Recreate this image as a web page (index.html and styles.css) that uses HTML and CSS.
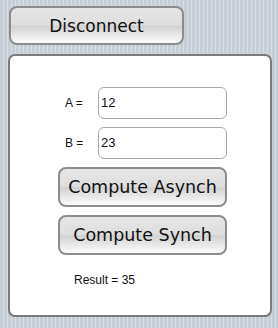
FILE: index.html
```html
<!DOCTYPE html>
<html>
<head>
<meta charset="utf-8">
<link rel="stylesheet" href="styles.css">
</head>
<body>
<div class="page">
  <button class="btn btn-top">Disconnect</button>
  <div class="panel">
    <div class="row">
      <span class="label">A =</span>
      <div class="field">12</div>
    </div>
    <div class="row">
      <span class="label">B =</span>
      <div class="field">23</div>
    </div>
    <button class="btn btn-wide">Compute Asynch</button>
    <button class="btn btn-wide">Compute Synch</button>
    <div class="result">Result = 35</div>
  </div>
</div>
</body>
</html>
```

FILE: styles.css
```css
html, body {
  margin: 0;
  padding: 0;
}
body {
  width: 278px;
  height: 328px;
  background: repeating-linear-gradient(to right, #c6ced6 0px, #c6ced6 3px, #d8dee4 3px, #d8dee4 4px);
  font-family: "Liberation Sans", Arial, sans-serif;
}
.page {
  display: flex;
  flex-direction: column;
  padding: 6px 0 0 8px;
}
.btn {
  box-sizing: border-box;
  border: 2px solid #8c8c8c;
  border-radius: 8px;
  background: linear-gradient(to bottom, #e6e6e6 0%, #dedede 48%, #d2d2d2 52%, #ececec 82%, #fbfbfb 100%);
  font-family: "DejaVu Sans", Verdana, sans-serif;
  color: #111;
  padding: 0;
  cursor: pointer;
}
.btn-top {
  margin-left: 1px;
  width: 175px;
  height: 39px;
  font-size: 17px;
}
.panel {
  box-sizing: border-box;
  margin-top: 9px;
  width: 264px;
  height: 263px;
  background: #fff;
  border: 2px solid #7a7a7a;
  border-radius: 7px;
  display: flex;
  flex-direction: column;
  padding: 31px 0 0 48px;
}
.row {
  display: flex;
  align-items: center;
  margin-bottom: 8px;
}
.label {
  box-sizing: border-box;
  width: 40px;
  padding-left: 7px;
  font-size: 12px;
  color: #111;
}
.field {
  box-sizing: border-box;
  width: 129px;
  height: 32px;
  border: 1px solid #a8a8a8;
  border-radius: 6px;
  font-size: 13px;
  line-height: 30px;
  padding-left: 2px;
  color: #111;
}
.btn-wide {
  width: 169px;
  height: 40px;
  font-size: 17.5px;
  margin-bottom: 8px;
}
.result {
  margin-top: 10px;
  padding-left: 16px;
  font-size: 12px;
  color: #111;
}
```
